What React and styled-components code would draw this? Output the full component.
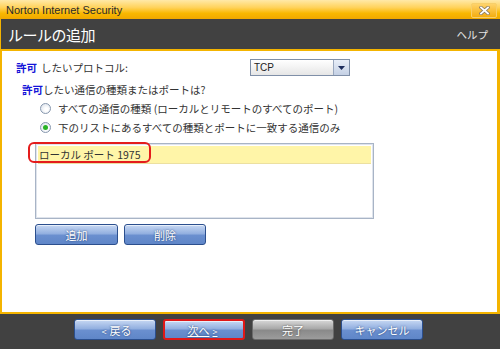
import styled, { createGlobalStyle } from 'styled-components';

const GlobalStyle = createGlobalStyle`
    html, body {
        margin: 0;
        padding: 0;
        width: 500px;
        height: 349px;
        overflow: hidden;
        background: #ffffff;
    }
`;

const jp = `"Noto Sans CJK JP", "Liberation Sans", sans-serif`;
const orange = '#f4b400';

const Window = styled.div`
    display: flex;
    flex-direction: column;
    width: 500px;
    height: 349px;
    font-family: ${jp};
    font-size: 10.5px;
    color: #333333;
`;

const TitleBar = styled.div`
    height: 19px;
    display: flex;
    align-items: center;
    justify-content: space-between;
    padding: 0 3px 0 6px;
    box-sizing: border-box;
    background: linear-gradient(to bottom, #ffe9a8 0%, #ffd25a 40%, #f9b800 70%, #f0a800 100%);
    font-family: "Liberation Sans", Arial, sans-serif;
    font-size: 11px;
    color: #2a2a2a;
`;

const CloseButton = styled.div`
    width: 26px;
    height: 15px;
    margin-top: 2px;
    box-sizing: border-box;
    display: flex;
    align-items: center;
    justify-content: center;
    border: 1px solid #f7cf6a;
    border-radius: 2px;
    background: linear-gradient(to bottom, #ffd36a, #f3ad10);
`;

const Header = styled.div`
    height: 30px;
    display: flex;
    align-items: center;
    justify-content: space-between;
    padding: 0 12px 0 7px;
    background: #414141;
    border-left: 1px solid ${orange};
    border-bottom: 2px solid ${orange};
    color: #ffffff;

    h1 {
        margin: 0;
        font-size: 15px;
        font-weight: normal;
        letter-spacing: -0.5px;
    }

    span {
        font-size: 10.5px;
        color: #e4e4e4;
    }
`;

const Content = styled.div`
    flex: 1;
    display: flex;
    flex-direction: column;
    background: #ffffff;
    border-left: 2px solid ${orange};
    border-right: 3px solid ${orange};
`;

const ProtocolRow = styled.div`
    display: flex;
    align-items: center;
    height: 17px;
    margin-top: 8px;
    padding-left: 14px;

    label {
        width: 234px;
    }
`;

const Allow = styled.b`
    color: #1414d8;
    font-weight: bold;
    margin-right: ${(p) => p.$gap || 0}px;
`;

const Select = styled.div`
    width: 100px;
    height: 17px;
    box-sizing: border-box;
    display: flex;
    border: 1px solid #7f8fa8;
    background: linear-gradient(to bottom, #ffffff, #e6e6e6);
    font-family: "Liberation Sans", Arial, sans-serif;
    font-size: 10px;
    color: #222222;

    .value {
        flex: 1;
        padding-left: 3px;
        line-height: 15px;
    }

    .arrow {
        width: 15px;
        display: flex;
        align-items: center;
        justify-content: center;
        border-left: 1px solid #9aa8bf;
        background: linear-gradient(to bottom, #e8eef8, #c4d0e4);
    }
`;

const Question = styled.div`
    height: 14px;
    line-height: 14px;
    margin-top: 7px;
    padding-left: 20px;
`;

const RadioRow = styled.div`
    display: flex;
    align-items: center;
    gap: 7px;
    height: 16px;
    margin-top: ${(p) => p.$top}px;
    padding-left: 38px;
`;

const RadioDot = styled.span`
    width: 11px;
    height: 11px;
    box-sizing: border-box;
    border-radius: 50%;
    border: 1px solid #8797ad;
    background: radial-gradient(circle at 60% 60%, #ffffff 20%, #d5dde8 100%);
    display: flex;
    align-items: center;
    justify-content: center;

    &::after {
        content: '';
        width: 5px;
        height: 5px;
        border-radius: 50%;
        background: ${(p) => (p.$checked ? '#29b324' : 'transparent')};
    }
`;

const ListWrap = styled.div`
    position: relative;
    width: 339px;
    height: 76px;
    margin: 8px 0 0 33px;
`;

const ListBox = styled.div`
    height: 100%;
    box-sizing: border-box;
    border: 1px solid #a8b4c6;
    box-shadow: inset 0 0 0 1px #dfe4ec;
    padding: 2px;
    background: #ffffff;
`;

const ListItem = styled.div`
    height: 17px;
    line-height: 17px;
    padding-left: 1px;
    background: #fff5a8;
    border-bottom: 1px solid #ece0a0;
`;

const Highlight = styled.div`
    position: absolute;
    left: -7px;
    top: -1px;
    width: 123px;
    height: 21px;
    box-sizing: border-box;
    border: 2px solid #e41c1c;
    border-radius: 6px;
`;

const ActionRow = styled.div`
    display: flex;
    gap: 6px;
    margin: 5px 0 0 33px;
`;

const BlueButton = styled.button`
    width: ${(p) => p.$w || 82}px;
    height: 21px;
    box-sizing: border-box;
    padding: 0;
    border: 1px solid #2b4f8e;
    border-radius: 3px;
    background: linear-gradient(to bottom, #c7d8f3 0%, #93b0e0 45%, #6a8fcf 55%, #5f86c8 100%);
    box-shadow: inset 0 1px 0 rgba(255, 255, 255, 0.6);
    font-family: ${jp};
    font-size: 11px;
    color: #ffffff;
    text-shadow: 0 0 2px #1e3a6e;
`;

const Footer = styled.div`
    height: 30px;
    display: flex;
    align-items: flex-start;
    gap: 7px;
    padding: 5px 0 0 74px;
    box-sizing: content-box;
    background: #414141;
    border-top: 2px solid ${orange};
`;

const NavButton = styled(BlueButton)`
    width: 82px;
    height: 21px;
    border-color: ${(p) => (p.$focused ? '#e01818' : p.$gray ? '#6a6a6a' : '#2b4f8e')};
    border-width: ${(p) => (p.$focused ? 2 : 1)}px;
    background: ${(p) =>
        p.$gray
            ? 'linear-gradient(to bottom, #d8d8d8 0%, #a9a9a9 45%, #8a8a8a 55%, #9c9c9c 100%)'
            : 'linear-gradient(to bottom, #c7d8f3 0%, #93b0e0 45%, #6a8fcf 55%, #5f86c8 100%)'};
    text-shadow: ${(p) => (p.$gray ? '0 0 2px #444' : '0 0 2px #1e3a6e')};
    text-decoration: ${(p) => (p.$focused ? 'underline' : 'none')};
`;

const Arrow = styled.span`
    font-size: 9px;
    margin: 0 3px;
`;

export default function App() {
    return (
        <Window>
            <GlobalStyle />
            <TitleBar>
                <span>Norton Internet Security</span>
                <CloseButton>
                    <svg width="11" height="9" viewBox="0 0 11 9">
                        <path d="M2 1.5 L9 7.5 M9 1.5 L2 7.5" stroke="#8a7a60" strokeWidth="3.5" strokeLinecap="square" />
                        <path d="M2 1.5 L9 7.5 M9 1.5 L2 7.5" stroke="#ffffff" strokeWidth="1.8" strokeLinecap="square" />
                    </svg>
                </CloseButton>
            </TitleBar>
            <Header>
                <h1>ルールの追加</h1>
                <span>ヘルプ</span>
            </Header>
            <Content>
                <ProtocolRow>
                    <label>
                        <Allow $gap={4}>許可</Allow>したいプロトコル:
                    </label>
                    <Select>
                        <span className="value">TCP</span>
                        <span className="arrow">
                            <svg width="7" height="4" viewBox="0 0 7 4">
                                <path d="M0 0 H7 L3.5 4 Z" fill="#1c2c5c" />
                            </svg>
                        </span>
                    </Select>
                </ProtocolRow>
                <Question>
                    <Allow>許可</Allow>したい通信の種類またはポートは?
                </Question>
                <RadioRow $top={3}>
                    <RadioDot />
                    すべての通信の種類 (ローカルとリモートのすべてのポート)
                </RadioRow>
                <RadioRow $top={3}>
                    <RadioDot $checked />
                    下のリストにあるすべての種類とポートに一致する通信のみ
                </RadioRow>
                <ListWrap>
                    <ListBox>
                        <ListItem>ローカル ポート 1975</ListItem>
                    </ListBox>
                    <Highlight />
                </ListWrap>
                <ActionRow>
                    <BlueButton $w={83}>追加</BlueButton>
                    <BlueButton $w={82}>削除</BlueButton>
                </ActionRow>
            </Content>
            <Footer>
                <NavButton>
                    <Arrow>&lt;</Arrow>戻る
                </NavButton>
                <NavButton $focused>
                    次へ<Arrow>&gt;</Arrow>
                </NavButton>
                <NavButton $gray>完了</NavButton>
                <NavButton>キャンセル</NavButton>
            </Footer>
        </Window>
    );
}
